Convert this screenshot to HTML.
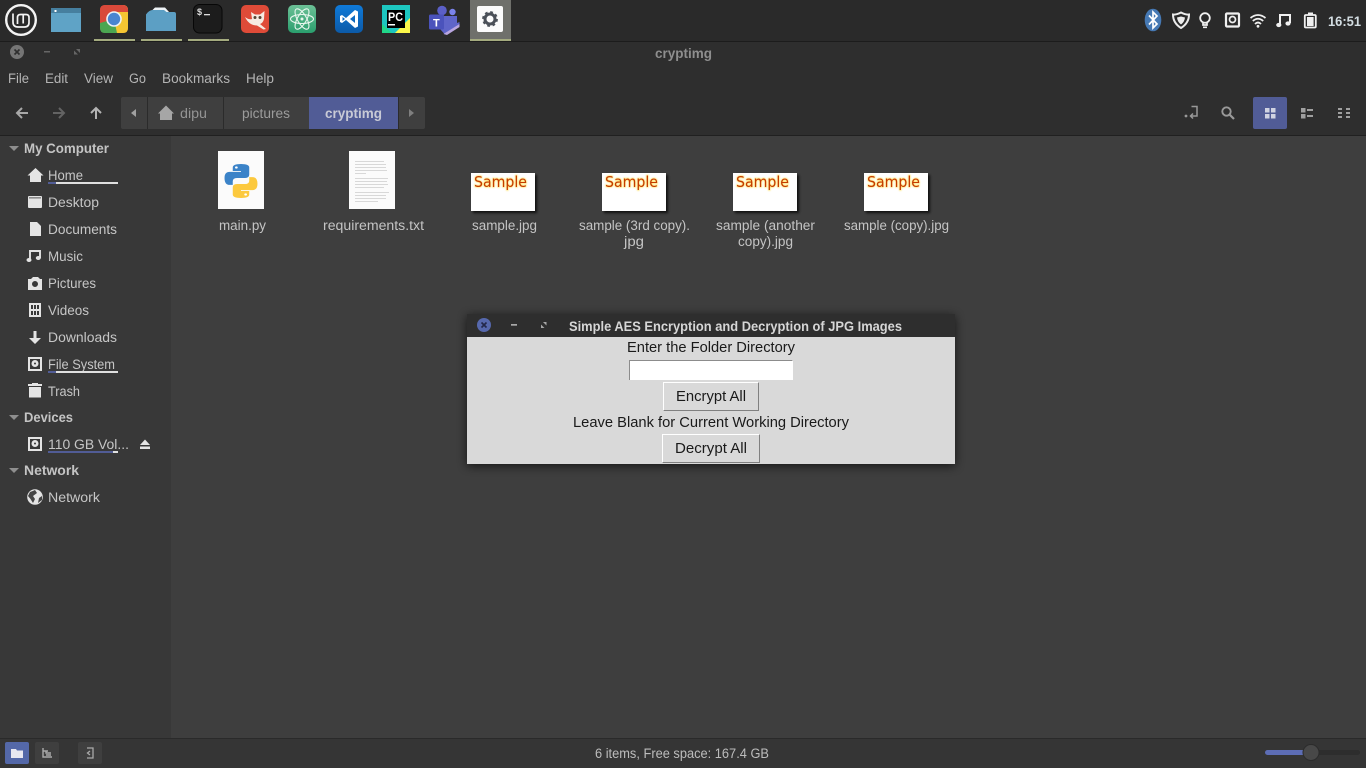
<!DOCTYPE html>
<html><head><meta charset="utf-8"><style>
html,body{margin:0;padding:0;width:1366px;height:768px;overflow:hidden;background:#3e3e3e}
svg{display:block}
text{font-family:"Liberation Sans",sans-serif;font-size:13.5px}
.m{fill:#b4b4b4}.s{fill:#c6c6c6}.b{font-weight:bold}.f{fill:#c4c4c4}
.d{fill:#1a1a1a;font-size:14.5px}
.sm{font-family:"DejaVu Sans",sans-serif;font-size:15.5px}
</style></head><body>
<svg width="1366" height="768" viewBox="0 0 1366 768" xmlns="http://www.w3.org/2000/svg">
<defs>
<filter id="sh" x="-10%" y="-20%" width="120%" height="140%"><feGaussianBlur stdDeviation="5"/></filter>
<filter id="sh2" x="-20%" y="-20%" width="140%" height="140%"><feGaussianBlur stdDeviation="1.2"/></filter>
<filter id="gl" x="-10%" y="-20%" width="120%" height="140%"><feGaussianBlur stdDeviation="0.7"/></filter>
<linearGradient id="atom" x1="0" y1="0" x2="0" y2="1"><stop offset="0" stop-color="#6cc096"/><stop offset="1" stop-color="#2a9f6e"/></linearGradient>
<linearGradient id="vs" x1="0" y1="0" x2="0" y2="1"><stop offset="0" stop-color="#0f7ad8"/><stop offset="1" stop-color="#0c5aa8"/></linearGradient>
<g id="samp">
<rect x="2" y="2" width="64" height="38" fill="#000" opacity=".75" filter="url(#sh2)"/>
<rect width="64" height="38" fill="#fff"/>
<text x="3" y="14" textLength="53" lengthAdjust="spacingAndGlyphs" class="sm" fill="#ffe36a" stroke="#ffe36a" stroke-width="1.2" filter="url(#gl)">Sample</text>
<text x="3" y="14" textLength="53" lengthAdjust="spacingAndGlyphs" class="sm" fill="#c43a00">Sample</text>
</g>
</defs>

<!-- backgrounds -->
<rect width="1366" height="768" fill="#3e3e3e"/>
<rect width="1366" height="41" fill="#2a2a2a"/>
<rect y="41" width="1366" height="1" fill="#1c1c1c"/>
<rect y="42" width="1366" height="93" fill="#2e2e2e"/>
<rect y="135" width="1366" height="1" fill="#202020"/>
<rect y="136" width="171" height="603" fill="#383838"/>
<rect y="738" width="1366" height="1" fill="#2a2a2a"/>
<rect y="739" width="1366" height="29" fill="#353535"/>

<!-- dock -->
<circle cx="21" cy="20" r="14.8" fill="none" stroke="#f4f4f4" stroke-width="2.4"/>
<path d="M13 13.500 V22 Q13 27 18 27 H24.500 Q29 27 29 22.500 V17.500 Q29 14.500 26 14.500 H20.500 Q17.500 14.500 17.500 17.500 V24 M23.200 15 V23.500" fill="none" stroke="#f4f4f4" stroke-width="1.700"/>

<rect x="51" y="8" width="30" height="24" fill="#5fa3c6"/><rect x="51" y="8" width="30" height="5" fill="#467f9f"/><rect x="54.500" y="10" width="2" height="2" fill="#fff"/>

<rect x="100" y="5" width="28" height="28" rx="5" fill="#d9493a"/>
<path d="M100 26 L100 23 L114 19 L122 33 L105 33 Q100 33 100 28Z" fill="#4ba651"/>
<path d="M128 12 V28 Q128 33 123 33 H117 L114 19 L106 5 H123 Q128 5 128 10Z" fill="#f5c532"/>
<path d="M106 5 H123 Q127 5 128 9 V12 H114 L103 16 L100 14 V10 Q100 5 105 5Z" fill="#d9493a"/>
<circle cx="114" cy="19" r="7.800" fill="#eef2f7"/><circle cx="114" cy="19" r="6.200" fill="#4a85d0"/>

<path d="M152 10.500 L155 7.500 H165 L169 12 H152Z" fill="#eef3f6"/>
<path d="M146 14.500 Q149 10 153 10 H164 L166.500 12 H174 Q176 12 176 14 V31 H146Z" fill="#5c9fc4"/>

<rect x="193.500" y="4.500" width="28.500" height="28.500" rx="6" fill="#1c1c1c" stroke="#070707"/>
<text x="197" y="15" style="font-size:9px;font-weight:bold" fill="#ddd">$</text><rect x="204" y="14" width="6" height="1.300" fill="#ddd"/>

<rect x="241" y="5" width="28" height="28" rx="5" fill="#df4b38"/>
<path d="M245 17 Q249 20 252 19 L251 12 L255 14.500 H260 L264.500 11 L264 19 Q263 23 260 24 L266 29 L263.500 29.500 L257 25.500 Q249 25.500 245 17Z" fill="#f6ebe2"/>
<circle cx="255" cy="17.500" r="1.500" fill="#543"/><circle cx="260" cy="17.500" r="1.500" fill="#543"/>

<rect x="288" y="5" width="28" height="28" rx="5" fill="url(#atom)"/>
<g fill="none" stroke="#e8f6ee" stroke-width="1.100"><ellipse cx="302" cy="19" rx="11.500" ry="4.500"/><ellipse cx="302" cy="19" rx="11.500" ry="4.500" transform="rotate(60 302 19)"/><ellipse cx="302" cy="19" rx="11.500" ry="4.500" transform="rotate(120 302 19)"/></g><circle cx="302" cy="19" r="1.500" fill="#e8f6ee"/>

<rect x="335" y="5" width="28" height="28" rx="5" fill="url(#vs)"/>
<path d="M355 10 L346 18 L342 15 L340 16 V22 L342 23 L346 20 L355 28 L358 26.500 V11.500Z M355 15 V23 L350 19Z M342.500 17 L345 19 L342.500 21Z" fill="#fff" fill-rule="evenodd"/>

<rect x="382" y="5" width="28" height="28" fill="#21d789"/><path d="M382 5H410V22L400 33H392L382 24Z" fill="#1dc6c0"/><path d="M395 33 L410 18 V33Z" fill="#fcf84a"/>
<rect x="387" y="10" width="18" height="18" fill="#000"/>
<text x="388" y="21" textLength="15" lengthAdjust="spacingAndGlyphs" style="font-size:11.500px;font-weight:bold" fill="#fff">PC</text><rect x="388" y="24" width="7" height="1.500" fill="#fff"/>

<circle cx="442" cy="10.500" r="4.800" fill="#5b5fc7"/><circle cx="452.500" cy="12" r="3.200" fill="#7b83eb"/>
<path d="M436 16 H457 V23 L459.500 22 V26 L445 34.500 L440 29 H436Z" fill="#5f65c9"/><path d="M443.500 34 L459.500 24 L459.500 27 L447 35Z" fill="#b9a6e0"/>
<rect x="429" y="14.500" width="15" height="15" rx="1.500" fill="#4b53bc"/><text x="433" y="26.500" style="font-size:11px;font-weight:bold" fill="#fff">T</text>

<rect x="470" y="0" width="41" height="39" fill="#6f706b"/>
<rect x="477" y="6" width="26" height="26" rx="2" fill="#fbfbfb"/>
<circle cx="490" cy="19" r="5" fill="none" stroke="#4b5058" stroke-width="3"/>
<circle cx="490" cy="19" r="6.800" fill="none" stroke="#4b5058" stroke-width="2.200" stroke-dasharray="2.700 2.640"/>
<g fill="#a4ab7f"><rect x="94" y="39" width="41" height="2"/><rect x="141" y="39" width="41" height="2"/><rect x="188" y="39" width="41" height="2"/><rect x="470" y="39" width="41" height="2"/></g>

<!-- tray -->
<ellipse cx="1153" cy="20" rx="8.300" ry="11.300" fill="#4679b4"/>
<path d="M1149 15.500 L1157 24 L1153 28 V12 L1157 16 L1149 24.500" fill="none" stroke="#fff" stroke-width="1.700"/>
<path d="M1181 12.500 Q1186 15 1189 14.500 Q1189 23 1181 28 Q1173 23 1173 14.500 Q1176 15 1181 12.500Z" fill="none" stroke="#ececec" stroke-width="2"/><path d="M1181 16.500 L1185 17.500 Q1184.500 22 1181 24.500 Q1177.500 22 1177 17.500Z" fill="#ececec"/>
<circle cx="1205" cy="18" r="4.800" fill="none" stroke="#f0f0f0" stroke-width="1.800"/><path d="M1203 23 V25 H1207 V23 M1203 27.300 H1207" fill="none" stroke="#f0f0f0" stroke-width="1.700"/>
<rect x="1226" y="13.500" width="13" height="13" rx="1" fill="none" stroke="#f0f0f0" stroke-width="2.200"/><circle cx="1232.500" cy="19.500" r="3" fill="none" stroke="#f0f0f0" stroke-width="1.700"/>
<g fill="none" stroke="#f0f0f0" stroke-width="1.800"><path d="M1250.500 18 Q1258 12 1265.500 18"/><path d="M1252.800 21 Q1258 16.500 1263.200 21"/><path d="M1255 24 Q1258 21 1261 24"/></g><circle cx="1258" cy="26.300" r="1.400" fill="#f0f0f0"/>
<path d="M1280 25 V15 H1290 V23" fill="none" stroke="#f0f0f0" stroke-width="2"/><ellipse cx="1278.800" cy="25" rx="2.600" ry="2.100" fill="#f0f0f0"/><ellipse cx="1288" cy="23.500" rx="2.600" ry="2.100" fill="#f0f0f0"/>
<rect x="1304.800" y="15" width="11" height="12.500" rx="1" fill="none" stroke="#f0f0f0" stroke-width="1.800"/><rect x="1308" y="12.500" width="5" height="2.500" fill="#f0f0f0"/><rect x="1307" y="17" width="6.600" height="9" fill="#f0f0f0"/>
<text x="1328" y="26" textLength="33" lengthAdjust="spacingAndGlyphs" class="b" fill="#d3dde2">16:51</text>

<!-- window controls -->
<circle cx="17" cy="52" r="7" fill="#757575"/><path d="M14.500 49.500 L19.500 54.500 M19.500 49.500 L14.500 54.500" stroke="#2e2e2e" stroke-width="1.600"/>
<rect x="44" y="51" width="6" height="1.500" fill="#666"/>
<path d="M74 54.500 V50.500 L78 54.500Z M80 49 V53 L76 49Z" fill="#666"/>
<text x="655" y="58" textLength="57" lengthAdjust="spacingAndGlyphs" class="b" fill="#8e8e8e">cryptimg</text>

<!-- menu -->
<g class="m">
<text x="8" y="83" textLength="21" lengthAdjust="spacingAndGlyphs">File</text>
<text x="45" y="83" textLength="23" lengthAdjust="spacingAndGlyphs">Edit</text>
<text x="84" y="83" textLength="29" lengthAdjust="spacingAndGlyphs">View</text>
<text x="129" y="83" textLength="17" lengthAdjust="spacingAndGlyphs">Go</text>
<text x="162" y="83" textLength="68" lengthAdjust="spacingAndGlyphs">Bookmarks</text>
<text x="246" y="83" textLength="28" lengthAdjust="spacingAndGlyphs">Help</text>
</g>

<!-- toolbar -->
<g fill="none" stroke-width="2">
<path d="M28 113 H17 M22 108 L17 113 L22 118" stroke="#a8a8a8"/>
<path d="M53 113 H64 M59 108 L64 113 L59 118" stroke="#636363"/>
<path d="M96 119 V108 M91 113 L96 108 L101 113" stroke="#b4b4b4"/>
</g>
<rect x="121" y="97" width="304" height="32" rx="2" fill="#3f3f3f"/>
<rect x="147" y="97" width="1" height="32" fill="#2b2b2b"/><rect x="223" y="97" width="1" height="32" fill="#2b2b2b"/>
<rect x="309" y="97" width="89" height="32" fill="#515c96"/>
<rect x="398" y="97" width="1" height="32" fill="#2b2b2b"/>
<path d="M136 109 V117 L131 113Z" fill="#a0a0a0"/><path d="M409 109 V117 L414 113Z" fill="#7f7f7f"/>
<path d="M160 113 V120 H172 V113Z M166 105.500 L158 113.500 H174Z" fill="#a6a6a6"/>
<text x="180" y="118" textLength="27" lengthAdjust="spacingAndGlyphs" fill="#949494">dipu</text>
<text x="242" y="118" textLength="48" lengthAdjust="spacingAndGlyphs" fill="#9c9c9c">pictures</text>
<text x="325" y="118" textLength="57" lengthAdjust="spacingAndGlyphs" class="b" fill="#c8cad6">cryptimg</text>

<circle cx="1186" cy="116" r="1.400" fill="#999"/>
<path d="M1191 116 H1197 V106.500 H1191.500 M1193 113.500 L1190.500 116 L1193 118.500" fill="none" stroke="#999" stroke-width="1.500"/>
<circle cx="1226.500" cy="111.500" r="4.200" fill="none" stroke="#999" stroke-width="1.900"/><path d="M1229.500 114.500 L1234 119" stroke="#999" stroke-width="2.200"/>
<rect x="1253" y="97" width="34" height="32" rx="2" fill="#515c96"/>
<g fill="#d0d3e2"><rect x="1265" y="108" width="4.500" height="4.500"/><rect x="1271" y="108" width="4.500" height="4.500"/><rect x="1265" y="114" width="4.500" height="4.500"/><rect x="1271" y="114" width="4.500" height="4.500"/></g>
<g fill="#a0a0a0"><rect x="1301" y="108" width="4.500" height="4.500"/><rect x="1301" y="114" width="4.500" height="4.500"/><rect x="1307" y="109" width="6" height="2"/><rect x="1307" y="115" width="6" height="2"/>
<rect x="1338" y="108" width="4" height="2"/><rect x="1338" y="112" width="4" height="2"/><rect x="1338" y="116" width="4" height="2"/><rect x="1346" y="108" width="4" height="2"/><rect x="1346" y="112" width="4" height="2"/><rect x="1346" y="116" width="4" height="2"/></g>

<!-- sidebar -->
<g fill="#8e8e8e"><path d="M9 146 H19 L14 151Z"/><path d="M9 415 H19 L14 420Z"/><path d="M9 468 H19 L14 473Z"/></g>
<g class="b" fill="#c4c4c4">
<text x="24" y="153" textLength="85" lengthAdjust="spacingAndGlyphs">My Computer</text>
<text x="24" y="422" textLength="49" lengthAdjust="spacingAndGlyphs">Devices</text>
<text x="24" y="475" textLength="55" lengthAdjust="spacingAndGlyphs">Network</text>
</g>
<g class="s">
<text x="48" y="180" textLength="35" lengthAdjust="spacingAndGlyphs">Home</text>
<text x="48" y="207" textLength="51" lengthAdjust="spacingAndGlyphs">Desktop</text>
<text x="48" y="234" textLength="69" lengthAdjust="spacingAndGlyphs">Documents</text>
<text x="48" y="261" textLength="35" lengthAdjust="spacingAndGlyphs">Music</text>
<text x="48" y="288" textLength="48" lengthAdjust="spacingAndGlyphs">Pictures</text>
<text x="48" y="315" textLength="41" lengthAdjust="spacingAndGlyphs">Videos</text>
<text x="48" y="342" textLength="69" lengthAdjust="spacingAndGlyphs">Downloads</text>
<text x="48" y="369" textLength="67" lengthAdjust="spacingAndGlyphs">File System</text>
<text x="48" y="396" textLength="32" lengthAdjust="spacingAndGlyphs">Trash</text>
<text x="48" y="449" textLength="81" lengthAdjust="spacingAndGlyphs">110 GB Vol...</text>
<text x="48" y="502" textLength="52" lengthAdjust="spacingAndGlyphs">Network</text>
</g>
<!-- usage bars -->
<rect x="48" y="182" width="70" height="2" fill="#e0e0e0"/><rect x="48" y="182" width="8" height="2" fill="#515c96"/>
<rect x="48" y="371" width="70" height="2" fill="#e0e0e0"/><rect x="48" y="371" width="8" height="2" fill="#515c96"/>
<rect x="48" y="451" width="70" height="2" fill="#e0e0e0"/><rect x="48" y="451" width="65" height="2" fill="#515c96"/>
<!-- sidebar icons -->
<g fill="#e4e4e4">
<path d="M30 175 V182 H41 V175Z M35.500 168 L27.500 175.500 H43.500Z"/>
<rect x="28" y="196" width="14" height="12" rx="1"/><rect x="29" y="197.200" width="12" height="1.300" fill="#777"/>
<path d="M30 222 H37 L41 226 V236 H30Z"/>
<path d="M30 260 V251 H40 V258" fill="none" stroke="#e4e4e4" stroke-width="1.900"/><ellipse cx="29" cy="260" rx="2.500" ry="2"/><ellipse cx="38.300" cy="258" rx="2.500" ry="2"/>
<path fill-rule="evenodd" d="M28 279 H31 L33 277 H38 L40 279 H42 V290 H28Z M35 281 A3 3 0 1 0 35 287 A3 3 0 1 0 35 281Z"/>
<path fill-rule="evenodd" d="M29 303 H41 V317 H29Z M31 305 V309 H33 V305Z M31 311 V315 H33 V311Z M37 305 V309 H39 V305Z M37 311 V315 H39 V311Z M34 305 V309 H36 V305Z M34 311 V315 H36 V311Z"/>
<path d="M33.500 331 H36.500 V338 H41 L35 344 L29 338 H33.500Z"/>
<path fill-rule="evenodd" d="M28 357 H42 V371 H28Z M30 359 V369 H40 V359Z"/><path fill-rule="evenodd" d="M35 360 A3.500 3.500 0 1 0 35 367 A3.500 3.500 0 1 0 35 360Z M35 362.500 A1 1 0 1 1 35 364.500 A1 1 0 1 1 35 362.500Z"/>
<rect x="29" y="387" width="12" height="10.500"/><rect x="28" y="384" width="14" height="2"/><rect x="32" y="383" width="6" height="1"/>
<path fill-rule="evenodd" d="M28 437 H42 V451 H28Z M30 439 V449 H40 V439Z"/><path fill-rule="evenodd" d="M35 440 A3.500 3.500 0 1 0 35 447 A3.500 3.500 0 1 0 35 440Z M35 442.500 A1 1 0 1 1 35 444.500 A1 1 0 1 1 35 442.500Z"/>
<path d="M145 439.500 L150 445 H140Z M140 446.500 H150 V449 H140Z"/>
<circle cx="35" cy="497" r="7.800"/>
</g>
<path d="M30 492 Q33 491 35 490 L37 493 L33 496 L35 499 L33 503 L30.500 499 L28 496Z M39 498 L42 496 L42 500 L38 503Z" fill="#444"/>

<!-- files -->
<rect x="218" y="151" width="46" height="58" fill="#fbfbfb"/>
<g transform="translate(241 181) scale(1.03 .87) translate(-241 -183.500)">
<path d="M241 164 Q233 164 233 168 V172 H241 V173 H230 Q225 173 225 180 Q225 188 230 188 H233 V184 Q233 180 237 180 H245 Q249 180 249 176 V168 Q249 164 241 164Z" fill="#3b83c8"/>
<path d="M241 203 Q249 203 249 199 V195 H241 V194 H252 Q257 194 257 187 Q257 179 252 179 H249 V183 Q249 187 245 187 H237 Q233 187 233 191 V199 Q233 203 241 203Z" fill="#fcc93e"/>
<circle cx="236.500" cy="168" r="1.300" fill="#fff"/><circle cx="245.500" cy="199" r="1.300" fill="#fff"/>
</g>

<rect x="349" y="151" width="46" height="58" fill="#fbfbfb"/>
<g fill="#d0d0d0">
<rect x="355" y="161" width="29" height=".8"/><rect x="355" y="164" width="31" height=".8"/><rect x="355" y="167" width="31" height=".8"/><rect x="355" y="170" width="32" height=".8"/><rect x="355" y="173" width="11" height=".8"/>
<rect x="355" y="178" width="33" height=".8"/><rect x="355" y="181" width="32" height=".8"/><rect x="355" y="184" width="33" height=".8"/><rect x="355" y="187" width="29" height=".8"/>
<rect x="355" y="192" width="34" height=".8"/><rect x="355" y="195" width="31" height=".8"/><rect x="355" y="198" width="31" height=".8"/><rect x="355" y="201" width="23" height=".8"/>
</g>
<use href="#samp" x="471" y="173"/><use href="#samp" x="602" y="173"/><use href="#samp" x="733" y="173"/><use href="#samp" x="864" y="173"/>

<g class="f">
<text x="219" y="230" textLength="47" lengthAdjust="spacingAndGlyphs">main.py</text>
<text x="323" y="230" textLength="101" lengthAdjust="spacingAndGlyphs">requirements.txt</text>
<text x="472" y="230" textLength="65" lengthAdjust="spacingAndGlyphs">sample.jpg</text>
<text x="579" y="230" textLength="111" lengthAdjust="spacingAndGlyphs">sample (3rd copy).</text>
<text x="624" y="246" textLength="20" lengthAdjust="spacingAndGlyphs">jpg</text>
<text x="716" y="230" textLength="99" lengthAdjust="spacingAndGlyphs">sample (another</text>
<text x="738" y="246" textLength="55" lengthAdjust="spacingAndGlyphs">copy).jpg</text>
<text x="844" y="230" textLength="105" lengthAdjust="spacingAndGlyphs">sample (copy).jpg</text>
</g>

<!-- dialog -->
<rect x="467" y="316" width="488" height="150" fill="#000" opacity=".65" filter="url(#sh)"/>
<rect x="467" y="314" width="488" height="23" fill="#2e2e2e"/>
<rect x="467" y="337" width="488" height="127" fill="#d9d9d9"/>
<circle cx="484" cy="325" r="7" fill="#5668ad"/><path d="M481.500 322.500 L486.500 327.500 M486.500 322.500 L481.500 327.500" stroke="#23284a" stroke-width="1.600"/>
<rect x="511" y="324" width="6" height="1.700" fill="#a8a8a8"/>
<path d="M541 328 V324.500 L544.500 328Z M546.500 322 V325.500 L543 322Z" fill="#a8a8a8"/>
<text x="569" y="331" textLength="333" lengthAdjust="spacingAndGlyphs" class="b" fill="#d6d6d6">Simple AES Encryption and Decryption of JPG Images</text>
<text x="627" y="352" textLength="168" lengthAdjust="spacingAndGlyphs" class="d">Enter the Folder Directory</text>
<rect x="629" y="360" width="164" height="20" fill="#fff"/>
<path d="M629.500 380 V360.500 H792.500" fill="none" stroke="#8c8c8c"/>
<rect x="663.500" y="382.500" width="95" height="28" fill="#d9d9d9" stroke="#fff"/>
<path d="M663.500 410.500 H758.500 V382.500" fill="none" stroke="#808080"/>
<text x="676" y="401" textLength="70" lengthAdjust="spacingAndGlyphs" class="d">Encrypt All</text>
<text x="573" y="427" textLength="276" lengthAdjust="spacingAndGlyphs" class="d">Leave Blank for Current Working Directory</text>
<rect x="662.500" y="434.500" width="97" height="28" fill="#d9d9d9" stroke="#fff"/>
<path d="M662.500 462.500 H759.500 V434.500" fill="none" stroke="#808080"/>
<text x="675" y="453" textLength="72" lengthAdjust="spacingAndGlyphs" class="d">Decrypt All</text>

<!-- status bar -->
<rect x="5" y="742" width="24" height="22" rx="2" fill="#5468a8"/>
<path d="M11 749 H16 L17 750.500 H23 V758 H11Z" fill="#e8e8f0"/>
<rect x="35" y="742" width="24" height="22" rx="2" fill="#3f3f3f"/>
<path d="M43 748 V757 H52 M43 751 H48 M46 755 H51 M46 751 V753 H51" fill="none" stroke="#aaa" stroke-width="1.400"/>
<rect x="78" y="742" width="24" height="22" rx="2" fill="#3f3f3f"/>
<path d="M87 748 H93 V758 H87 M90 751 L87.500 753 L90 755" fill="none" stroke="#aaa" stroke-width="1.300"/>
<text x="595" y="758" textLength="174" lengthAdjust="spacingAndGlyphs" fill="#bcbcbc">6 items, Free space: 167.4 GB</text>
<rect x="1265" y="750" width="95" height="5" rx="2.500" fill="#2d2d2d"/>
<rect x="1265" y="750" width="44" height="5" rx="2.500" fill="#5d6db5"/>
<circle cx="1311" cy="752.500" r="8" fill="#484848" stroke="#2c2c2c"/>
</svg>
</body></html>
